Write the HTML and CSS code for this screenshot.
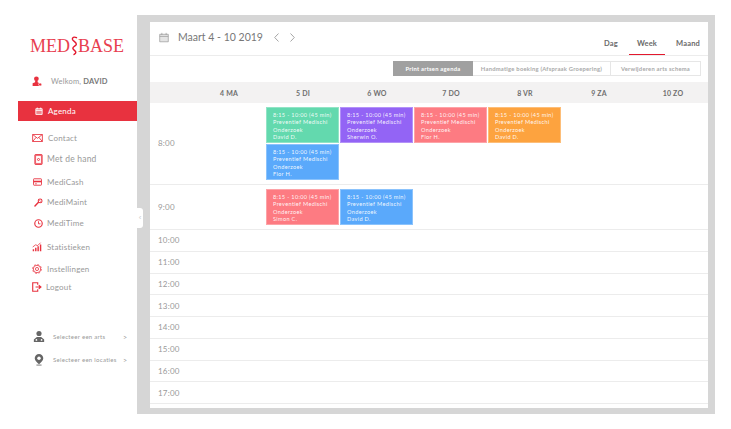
FILE: index.html
```html
<!DOCTYPE html>
<html lang="nl">
<head>
<meta charset="utf-8">
<title>Medibase Agenda</title>
<link rel="stylesheet" href="styles.css">
</head>
<body>
<div class="app">
  <aside class="sidebar">
    <div class="logo"><span>MED</span><svg class="snake" viewBox="0 0 12 24" width="10" height="24"><path d="M9 2C6 .6 3.400 1.800 4.200 4.200c.8 2 4.600 3 4.600 5.600 0 2.200-4.200 2.600-4.200 5 0 2.200 3.600 2.500 3.600 4.600 0 1.400-1 2-2.200 2.800" fill="none" stroke="#e3182d" stroke-width="1.700" stroke-linecap="round"/></svg><span>BASE</span></div>
    <div class="welcome">
      <svg class="ic" viewBox="0 0 16 16" width="10" height="10"><circle cx="7" cy="4.500" r="3.800" fill="#e8323f"/><path d="M5 8h4v2l3 1.500V16H1v-4.500L5 10z" fill="#e8323f"/><circle cx="13" cy="13.500" r="2.500" fill="#e8323f" stroke="#fff"/></svg>
      <span>Welkom, <b>DAVID</b></span>
    </div>
    <nav class="nav">
      <a class="item active"><svg viewBox="0 0 14 14" width="8" height="8"><path d="M1.500 3h11v10h-11zM4 1v3M10 1v3M1.500 6h11" fill="#fff" fill-opacity=".4" stroke="#fff" stroke-width="1.500"/></svg><span>Agenda</span></a>
      <a class="item contact"><svg viewBox="0 0 16 12" width="11" height="8"><path d="M.7.7h14.600v10.600H.7zM.7.700L8 6.500 15.300.7M.7 11.300L6 5M15.300 11.300L10 5" fill="none" stroke="#e8323f" stroke-width="1.300"/></svg><span>Contact</span></a>
      <a class="item hand"><svg viewBox="0 0 12 16" width="9" height="11"><rect x=".7" y=".7" width="10.600" height="14.600" rx="1" fill="#f1737d" stroke="#e8323f" stroke-width="1.200"/><rect x="2.500" y="3" width="7" height="10" fill="#fff"/><circle cx="6" cy="8" r="1.500" fill="none" stroke="#e8323f" stroke-width="1.300"/></svg><span>Met de hand</span></a>
      <a class="item cash"><svg viewBox="0 0 14 12" width="9" height="8"><rect x=".7" y="1" width="12.600" height="10" rx="1" fill="none" stroke="#e8323f" stroke-width="1.400"/><path d="M1 4h12v2.500H1z" fill="#e8323f"/><path d="M3 8.800h3" stroke="#e8323f" stroke-width="1.200"/></svg><span>MediCash</span></a>
      <a class="item maint"><svg viewBox="0 0 14 14" width="9" height="9"><path d="M1.500 12.500L7 6.500" stroke="#e8323f" stroke-width="2.200" stroke-linecap="round"/><circle cx="9.500" cy="4.500" r="3" fill="none" stroke="#e8323f" stroke-width="1.600"/><path d="M8 3l3 3" stroke="#e8323f"/></svg><span>MediMaint</span></a>
      <a class="item time"><svg viewBox="0 0 14 14" width="9" height="9"><circle cx="7" cy="7" r="5.800" fill="none" stroke="#e8323f" stroke-width="1.800"/><path d="M7 3.500V7.500H10" fill="none" stroke="#e8323f" stroke-width="1.400"/></svg><span>MediTime</span></a>
      <a class="item stats"><svg viewBox="0 0 14 14" width="10" height="10"><path d="M1 10h2v3H1zM4.300 8h2v5h-2zM7.600 6h2v7h-2zM11 3.500h2V13h-2z" fill="#e8323f"/><path d="M1 7L5 4l3 1 4-4" fill="none" stroke="#e8323f" stroke-width="1.100"/></svg><span>Statistieken</span></a>
      <a class="item settings"><svg viewBox="0 0 16 16" width="10" height="10"><circle cx="8" cy="8" r="2.500" fill="none" stroke="#e8323f" stroke-width="1.300"/><circle cx="8" cy="8" r="6" fill="none" stroke="#e8323f" stroke-width="1.300"/><circle cx="8" cy="8" r="7.200" fill="none" stroke="#e8323f" stroke-width="1" stroke-dasharray="3 2.600"/></svg><span>Instellingen</span></a>
      <a class="item logout"><svg viewBox="0 0 14 14" width="10" height="10"><path d="M8 4V1H1v12h7v-3" fill="none" stroke="#e8323f" stroke-width="1.600"/><path d="M5 7h6.500M9.500 4.500L12.500 7 9.500 9.500" fill="none" stroke="#e8323f" stroke-width="1.600"/></svg><span>Logout</span></a>
    </nav>
    <div class="selects">
      <a class="select"><svg viewBox="0 0 14 14" width="12" height="13"><circle cx="7" cy="3.500" r="3" fill="#666"/><path d="M1 13.500v-3L4.500 7.500h5L13 10.500v3z" fill="#666"/><circle cx="4" cy="11" r="1" fill="#fff"/><circle cx="10" cy="11" r="1" fill="#fff"/></svg><span>Selecteer een arts</span><i>&gt;</i></a>
      <a class="select"><svg viewBox="0 0 14 14" width="12" height="13"><path d="M7 .5a5 5 0 0 1 5 5c0 3-3 5-5 7-2-2-5-4-5-7a5 5 0 0 1 5-5z" fill="#666"/><circle cx="7" cy="5.500" r="2" fill="#fff"/><path d="M4 13.500h6" stroke="#666"/></svg><span>Selecteer een locaties</span><i>&gt;</i></a>
    </div>
  </aside>

  <main class="panel">
    <button class="collapse">&lsaquo;</button>
    <section class="card">
      <header class="top">
        <svg class="cal" viewBox="0 0 14 14" width="10" height="11"><path d="M1 2.500h12V13H1zM4 .5v3M10 .5v3M1 5.500h12" fill="#e4e4e4" stroke="#9a9a9a"/></svg>
        <h1>Maart 4 - 10 2019</h1>
        <span class="arrows">
          <svg viewBox="0 0 5 9" width="5" height="9"><path d="M4.500 .5L.7 4.500l3.800 4" fill="none" stroke="#a5a5a5"/></svg>
          <svg viewBox="0 0 5 9" width="5" height="9"><path d="M.5 .5l3.800 4-3.800 4" fill="none" stroke="#a5a5a5"/></svg>
        </span>
        <div class="tabs">
          <a class="tab tab-dag">Dag</a>
          <a class="tab tab-week">Week</a>
          <a class="tab tab-maand">Maand</a>
        </div>
      </header>
      <div class="toolbar">
        <a class="btn primary">Print artsen agenda</a>
        <a class="btn wide">Handmatige boeking (Afspraak Groepering)</a>
        <a class="btn del">Verwijderen arts schema</a>
      </div>
      <div class="head row">
        <span></span><span>4 MA</span><span>5 DI</span><span>6 WO</span><span>7 DO</span><span>8 VR</span><span>9 ZA</span><span>10 ZO</span>
      </div>
      <div class="row hour h8">
        <span class="label">8:00</span><div></div>
        <div class="cell">
          <div class="ev green">8:15 - 10:00 (45 min)<br>Preventief Medischi<br>Onderzoek<br>David D.</div>
          <div class="ev blue">8:15 - 10:00 (45 min)<br>Preventief Medischi<br>Onderzoek<br>Flor H.</div>
        </div>
        <div class="cell"><div class="ev purple">8:15 - 10:00 (45 min)<br>Preventief Medischi<br>Onderzoek<br>Sherwin O.</div></div>
        <div class="cell"><div class="ev red">8:15 - 10:00 (45 min)<br>Preventief Medischi<br>Onderzoek<br>Flor H.</div></div>
        <div class="cell"><div class="ev orange">8:15 - 10:00 (45 min)<br>Preventief Medischi<br>Onderzoek<br>David D.</div></div>
      </div>
      <div class="row hour h9">
        <span class="label">9:00</span><div></div>
        <div class="cell"><div class="ev red">8:15 - 10:00 (45 min)<br>Preventief Medischi<br>Onderzoek<br>Simon C.</div></div>
        <div class="cell"><div class="ev blue">8:15 - 10:00 (45 min)<br>Preventief Medischi<br>Onderzoek<br>David D.</div></div>
      </div>
      <div class="row hour"><span class="label">10:00</span></div>
      <div class="row hour"><span class="label">11:00</span></div>
      <div class="row hour"><span class="label">12:00</span></div>
      <div class="row hour"><span class="label">13:00</span></div>
      <div class="row hour"><span class="label">14:00</span></div>
      <div class="row hour"><span class="label">15:00</span></div>
      <div class="row hour"><span class="label">16:00</span></div>
      <div class="row hour"><span class="label">17:00</span></div>
    </section>
  </main>
</div>
</body>
</html>
```

FILE: styles.css
```css
* { box-sizing: border-box; }
html, body { margin: 0; height: 100%; background: #fff; }
body { font-family: "Lato", "Open Sans", sans-serif; color: #999; overflow: hidden; }
.app { display: flex; width: 731px; height: 429px; padding: 15px 16px 15px 0; }

/* sidebar */
.sidebar { width: 137px; flex: none; display: flex; flex-direction: column; }
.logo { display: flex; align-items: center; justify-content: center; height: 26px; margin: 18px 0 0 17px; font-family: "Liberation Serif", serif; font-size: 18px; color: #e8404f; line-height: 1; }
.snake { margin: 0 -1px; flex: none; }
.welcome { display: flex; align-items: center; gap: 9px; margin: 14px 0 0 32px; height: 16px; font-size: 7.500px; letter-spacing: .2px; }
.welcome b { color: #777; }
.nav { display: flex; flex-direction: column; margin-top: 12px; }
.item { display: flex; align-items: center; font-size: 8px; letter-spacing: .2px; height: 14px; padding-left: 34px; gap: 4px; }
.item svg { flex: none; }
.item.active { margin-left: 18px; height: 20px; padding-left: 17px; background: #e8323f; color: #fff; gap: 5px; }
.contact { margin-top: 10px; padding-left: 32px; gap: 5px; }
.hand { margin-top: 7px; font-size: 8.500px; }
.cash { margin-top: 9px; padding-left: 33px; gap: 5px; }
.maint { margin-top: 6px; }
.time { margin-top: 7px; }
.stats { margin-top: 10px; padding-left: 32px; gap: 5px; }
.settings { margin-top: 8px; padding-left: 32px; gap: 5px; }
.logout { margin-top: 4px; padding-left: 32px; }
.selects { display: flex; flex-direction: column; gap: 8px; margin-top: 35px; }
.select { display: flex; align-items: center; height: 15px; padding-left: 33px; font-size: 6px; letter-spacing: .3px; }
.select span { margin-left: 8px; width: 70px; white-space: nowrap; }
.select i { font-style: normal; font-size: 7px; }

/* panel */
.panel { position: relative; flex: 1; background: #d6d6d6; padding: 7px 7px 6px 13px; min-width: 0; }
.collapse { position: absolute; left: 0; top: 193px; width: 6px; height: 20px; padding: 0; border: 0; border-radius: 0 3px 3px 0; background: #fff; color: #ccc; font-size: 8px; line-height: 20px; }
.card { height: 100%; background: #fff; overflow: hidden; }
.top { display: flex; align-items: center; height: 34px; padding-left: 9px; border-bottom: 1px solid #ececec; }
.cal { flex: none; margin-top: -3px; }
.top h1 { margin: -3px 0 0 9px; font-weight: 400; font-size: 10.500px; color: #777; white-space: nowrap; }
.arrows { display: flex; gap: 11px; margin: -3px 0 0 11px; }
.tabs { display: flex; margin-left: auto; height: 100%; }
.tab { display: flex; align-items: center; justify-content: center; font-weight: 700; font-size: 7.500px; letter-spacing: .15px; color: #6a6a6a; padding-top: 15px; padding-bottom: 5px; border-bottom: 1px solid transparent; }
.tab-dag { width: 24px; margin-right: 6px; }
.tab-week { width: 36px; border-bottom-color: #e3182d; margin-right: 11px; }
.tab-maand { width: 24px; margin-right: 8px; }
.toolbar { display: flex; justify-content: flex-end; align-items: flex-start; height: 26px; padding: 5px 7px 0 0; }
.btn { display: flex; align-items: center; justify-content: center; height: 15px; font-size: 5.800px; font-weight: 700; letter-spacing: .25px; color: #a9a9a9; border: 1px solid #e6e6e6; border-left: 0; white-space: nowrap; }
.btn.primary { width: 80px; background: #a0a0a0; color: #fff; border: 0; }
.btn.wide { width: 138px; }
.btn.del { width: 90px; }

.row { display: grid; grid-template-columns: 42px repeat(7, 74px); width: 560px; }
.head { height: 21px; background: #f3f2f2; align-items: center; text-align: center; font-size: 7px; font-weight: 700; letter-spacing: .2px; color: #6f6f6f; }
.hour { height: 21.750px; border-bottom: 1px solid #ececec; align-items: center; }
.h8 { height: 82px; align-items: start; padding-top: 4px; }
.h9 { height: 45px; align-items: start; padding-top: 4px; }
.label { padding-left: 8px; font-size: 8px; letter-spacing: .2px; color: #999; white-space: nowrap; }
.h8 .label { padding-top: 31px; }
.h9 .label { padding-top: 13px; }
.cell { display: flex; flex-direction: column; gap: 1px; }
.ev { width: 73px; height: 36px; padding: 3px 0 0 6px; border: 1px solid rgba(255, 255, 255, .3); font-size: 5.600px; line-height: 7.300px; letter-spacing: .32px; color: rgba(255, 255, 255, .92); white-space: nowrap; overflow: hidden; background-clip: border-box; }
.green { background-color: #63d9ae; }
.blue { background-color: #5aa9fb; }
.purple { background-color: #9364f5; }
.red { background-color: #fd7b82; }
.orange { background-color: #fda33f; }
```
